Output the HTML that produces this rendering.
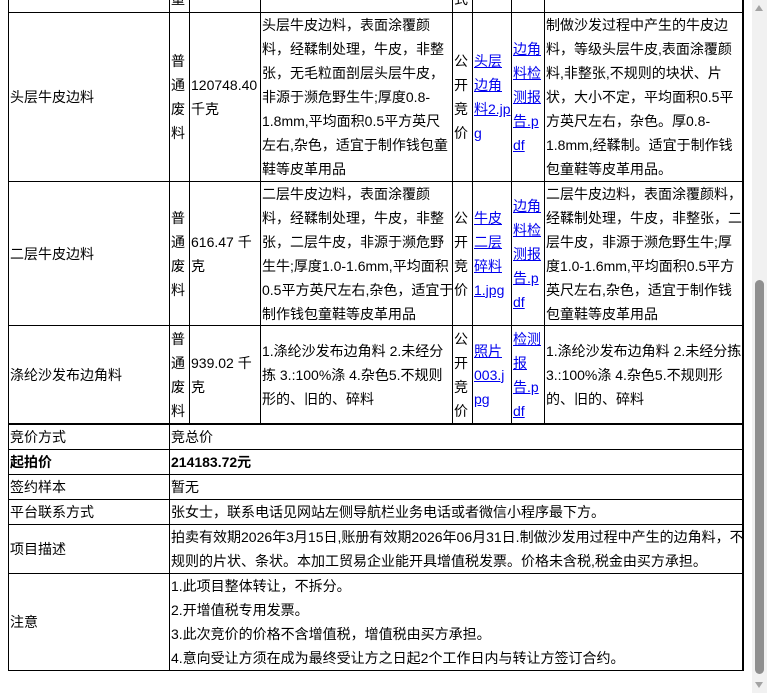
<!DOCTYPE html>
<html><head><meta charset="utf-8">
<style>
*{margin:0;padding:0;box-sizing:border-box}
html,body{width:767px;height:693px;overflow:hidden;background:#fff}
body{position:relative;font-family:"Liberation Sans","Noto Sans CJK SC",sans-serif;font-size:14px;color:#000;line-height:24px}
.h{position:absolute;height:1px;background:#000}
.v{position:absolute;width:1px;background:#000}
.c{position:absolute;display:flex;align-items:center;padding-left:1px;white-space:nowrap;overflow:hidden}
.c>div{width:100%}
a{color:#0000ee;text-decoration:underline}
b{font-weight:bold}
</style></head><body>
<!-- vertical lines top -->
<div class="v" style="left:8px;top:0;height:671px"></div>
<div class="v" style="left:169px;top:0;height:671px"></div>
<div class="v" style="left:189px;top:0;height:424px"></div>
<div class="v" style="left:260px;top:0;height:424px"></div>
<div class="v" style="left:452px;top:0;height:424px"></div>
<div class="v" style="left:472px;top:0;height:424px"></div>
<div class="v" style="left:511px;top:0;height:424px"></div>
<div class="v" style="left:544px;top:0;height:424px"></div>
<div class="v" style="left:742px;top:0;height:671px;width:2px"></div>
<!-- horizontal -->
<div class="h" style="left:8px;top:12px;width:735px"></div>
<div class="h" style="left:8px;top:181px;width:735px"></div>
<div class="h" style="left:8px;top:325px;width:735px"></div>
<div class="h" style="left:8px;top:423px;width:736px;height:2px"></div>
<div class="h" style="left:8px;top:449px;width:735px"></div>
<div class="h" style="left:8px;top:474px;width:735px"></div>
<div class="h" style="left:8px;top:499px;width:735px"></div>
<div class="h" style="left:8px;top:524px;width:735px"></div>
<div class="h" style="left:8px;top:573px;width:735px"></div>
<div class="h" style="left:8px;top:670px;width:736px"></div>

<!-- top partial -->
<div class="c" style="left:170px;top:-14px;width:19px;height:26px"><div>量</div></div>
<div class="c" style="left:453px;top:-14px;width:19px;height:26px"><div>式</div></div>

<!-- row1 -->
<div class="c" style="left:9px;top:13px;width:160px;height:168px"><div>头层牛皮边料</div></div>
<div class="c" style="left:170px;top:13px;width:19px;height:168px"><div>普<br>通<br>废<br>料</div></div>
<div class="c" style="left:190px;top:13px;width:70px;height:168px"><div>120748.40<br>千克</div></div>
<div class="c" style="left:261px;top:13px;width:191px;height:168px"><div>头层牛皮边料，表面涂覆颜<br>料，经鞣制处理，牛皮，非整<br>张，无毛粒面剖层头层牛皮，<br>非源于濒危野生牛;厚度0.8-<br>1.8mm,平均面积0.5平方英尺<br>左右,杂色，适宜于制作钱包童<br>鞋等皮革用品</div></div>
<div class="c" style="left:453px;top:13px;width:19px;height:168px"><div>公<br>开<br>竞<br>价</div></div>
<div class="c" style="left:473px;top:13px;width:38px;height:168px"><div><a>头层<br>边角<br>料2.jp<br>g</a></div></div>
<div class="c" style="left:512px;top:13px;width:32px;height:168px"><div><a>边角<br>料检<br>测报<br>告.p<br>df</a></div></div>
<div class="c" style="left:545px;top:13px;width:197px;height:168px"><div>制做沙发过程中产生的牛皮边<br>料，等级头层牛皮,表面涂覆颜<br>料,非整张,不规则的块状、片<br>状，大小不定，平均面积0.5平<br>方英尺左右，杂色。厚0.8-<br>1.8mm,经鞣制。适宜于制作钱<br>包童鞋等皮革用品。</div></div>

<!-- row2 -->
<div class="c" style="left:9px;top:182px;width:160px;height:143px"><div>二层牛皮边料</div></div>
<div class="c" style="left:170px;top:182px;width:19px;height:143px"><div>普<br>通<br>废<br>料</div></div>
<div class="c" style="left:190px;top:182px;width:70px;height:143px"><div>616.47 千<br>克</div></div>
<div class="c" style="left:261px;top:182px;width:191px;height:143px"><div>二层牛皮边料，表面涂覆颜<br>料，经鞣制处理，牛皮，非整<br>张，二层牛皮，非源于濒危野<br>生牛;厚度1.0-1.6mm,平均面积<br>0.5平方英尺左右,杂色，适宜于<br>制作钱包童鞋等皮革用品</div></div>
<div class="c" style="left:453px;top:182px;width:19px;height:143px"><div>公<br>开<br>竞<br>价</div></div>
<div class="c" style="left:473px;top:182px;width:38px;height:143px"><div><a>牛皮<br>二层<br>碎料<br>1.jpg</a></div></div>
<div class="c" style="left:512px;top:182px;width:32px;height:143px"><div><a>边角<br>料检<br>测报<br>告.p<br>df</a></div></div>
<div class="c" style="left:545px;top:182px;width:197px;height:143px"><div>二层牛皮边料，表面涂覆颜料，<br>经鞣制处理，牛皮，非整张，二<br>层牛皮，非源于濒危野生牛;厚<br>度1.0-1.6mm,平均面积0.5平方<br>英尺左右,杂色，适宜于制作钱<br>包童鞋等皮革用品</div></div>

<!-- row3 -->
<div class="c" style="left:9px;top:326px;width:160px;height:97px"><div>涤纶沙发布边角料</div></div>
<div class="c" style="left:170px;top:326px;width:19px;height:97px"><div>普<br>通<br>废<br>料</div></div>
<div class="c" style="left:190px;top:326px;width:70px;height:97px"><div>939.02 千<br>克</div></div>
<div class="c" style="left:261px;top:326px;width:191px;height:97px"><div>1.涤纶沙发布边角料 2.未经分<br>拣 3.:100%涤 4.杂色5.不规则<br>形的、旧的、碎料</div></div>
<div class="c" style="left:453px;top:326px;width:19px;height:97px"><div>公<br>开<br>竞<br>价</div></div>
<div class="c" style="left:473px;top:326px;width:38px;height:97px"><div><a>照片<br>003.j<br>pg</a></div></div>
<div class="c" style="left:512px;top:326px;width:32px;height:97px"><div><a>检测<br>报<br>告.p<br>df</a></div></div>
<div class="c" style="left:545px;top:326px;width:197px;height:97px"><div>1.涤纶沙发布边角料 2.未经分拣<br>3.:100%涤 4.杂色5.不规则形<br>的、旧的、碎料</div></div>

<!-- lower -->
<div class="c" style="left:9px;top:425px;width:160px;height:24px"><div>竞价方式</div></div>
<div class="c" style="left:170px;top:425px;width:572px;height:24px"><div>竞总价</div></div>
<div class="c" style="left:9px;top:450px;width:160px;height:24px"><div><b>起拍价</b></div></div>
<div class="c" style="left:170px;top:450px;width:572px;height:24px"><div><b>214183.72元</b></div></div>
<div class="c" style="left:9px;top:475px;width:160px;height:24px"><div>签约样本</div></div>
<div class="c" style="left:170px;top:475px;width:572px;height:24px"><div>暂无</div></div>
<div class="c" style="left:9px;top:500px;width:160px;height:24px"><div>平台联系方式</div></div>
<div class="c" style="left:170px;top:500px;width:572px;height:24px"><div>张女士，联系电话见网站左侧导航栏业务电话或者微信小程序最下方。</div></div>
<div class="c" style="left:9px;top:525px;width:160px;height:48px"><div>项目描述</div></div>
<div class="c" style="left:170px;top:525px;width:572px;height:48px"><div>拍卖有效期2026年3月15日,账册有效期2026年06月31日.制做沙发用过程中产生的边角料，不<br>规则的片状、条状。本加工贸易企业能开具增值税发票。价格未含税,税金由买方承担。</div></div>
<div class="c" style="left:9px;top:574px;width:160px;height:96px"><div>注意</div></div>
<div class="c" style="left:170px;top:574px;width:572px;height:96px"><div>1.此项目整体转让，不拆分。<br>2.开增值税专用发票。<br>3.此次竞价的价格不含增值税，增值税由买方承担。<br>4.意向受让方须在成为最终受让方之日起2个工作日内与转让方签订合约。</div></div>

<!-- scrollbar -->
<div style="position:absolute;left:752px;top:0;width:15px;height:693px;background:#f1f1f1"></div>
<div style="position:absolute;left:755px;top:280px;width:9px;height:394px;background:#8f8f8f;border-radius:5px"></div>
<div style="position:absolute;left:755px;top:5px;width:0;height:0;border-left:4.5px solid transparent;border-right:4.5px solid transparent;border-bottom:6px solid #a3a3a3"></div>
<div style="position:absolute;left:755px;top:682px;width:0;height:0;border-left:4.5px solid transparent;border-right:4.5px solid transparent;border-top:6px solid #a3a3a3"></div>
</body></html>
